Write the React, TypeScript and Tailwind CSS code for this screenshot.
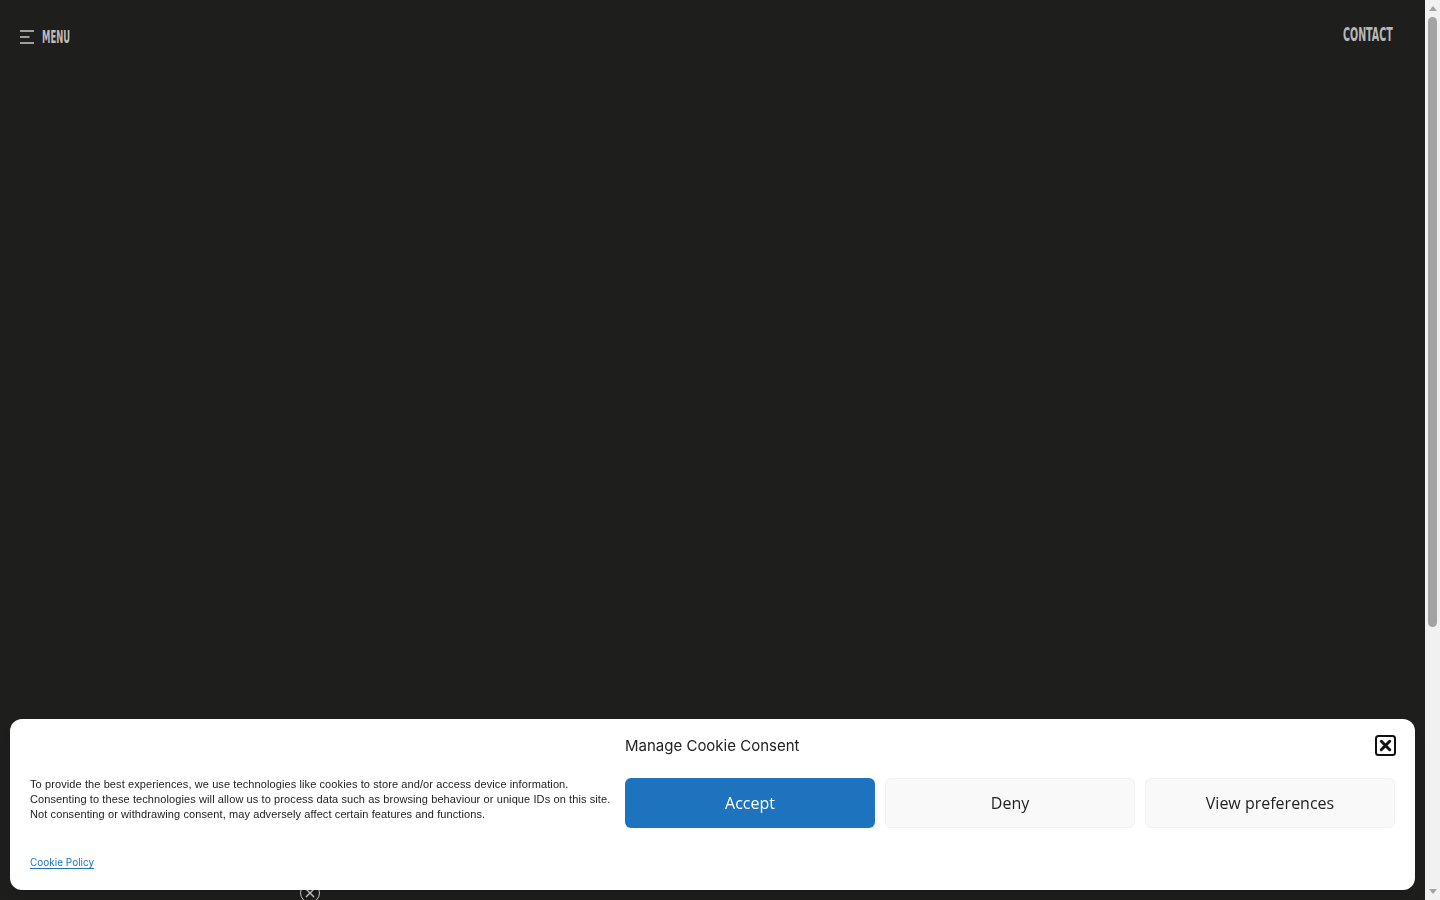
import { useState } from "react";

const displayFont =
  "font-['Liberation_Sans_Narrow','DejaVu_Sans_Condensed','Liberation_Sans',sans-serif]";

function MenuIcon() {
  return (
    <svg width="14" height="14" viewBox="0 0 14 14" fill="none" className="text-[#c9c9c9]">
      <path d="M0 1h14M0 7h9.5M0 13h14" stroke="currentColor" strokeWidth="1.6" />
    </svg>
  );
}

function CloseBox() {
  return (
    <svg width="21" height="21" viewBox="0 0 21 21" fill="none">
      <rect x="1" y="1" width="19" height="19" rx="2.5" stroke="#111" strokeWidth="2" />
      <path d="M6.3 6.3l8.4 8.4M14.7 6.3l-8.4 8.4" stroke="#111" strokeWidth="3" strokeLinecap="round" />
    </svg>
  );
}

// classic page scrollbar on the right edge
function ScrollBar() {
  return (
    <div className="w-[15px] shrink-0 bg-[#f1f1f1] flex flex-col">
      <div className="h-[17px] flex items-center justify-center">
        <svg width="8" height="5" viewBox="0 0 8 5">
          <path d="M4 0L8 5H0z" fill="#a3a3a3" />
        </svg>
      </div>
      <div className="flex-1 px-[3px]">
        <div className="h-[610px] rounded-full bg-[#a3a3a3]" />
      </div>
      <div className="h-[17px] flex items-center justify-center">
        <svg width="8" height="5" viewBox="0 0 8 5">
          <path d="M0 0H8L4 5z" fill="#a3a3a3" />
        </svg>
      </div>
    </div>
  );
}

function CookieBanner({ onClose }: { onClose: () => void }) {
  return (
    <div className="fixed left-[10px] right-[25px] bottom-[10px] z-50">
      <div className="bg-white rounded-xl shadow-lg px-5 pt-[15px] pb-[18px] grid grid-cols-[minmax(0,1fr)_770px] grid-rows-[28px_auto_auto] gap-x-[17px]">
        <div />
        <div className="flex items-center justify-between">
          <h2 className="-mt-[4px] text-[15px] text-[#222] font-['Inter',sans-serif]">Manage Cookie Consent</h2>
          <button onClick={onClose} aria-label="Close" className="-mt-[5px] mr-[-1px]">
            <CloseBox />
          </button>
        </div>

        <p className="self-start mt-[15px] whitespace-nowrap text-[11px] leading-[15px] tracking-[0.1px] text-[#222] font-['Liberation_Sans',sans-serif]">
          To provide the best experiences, we use technologies like cookies to store and/or access device information.
          <br />
          Consenting to these technologies will allow us to process data such as browsing behaviour or unique IDs on this site.
          <br />
          Not consenting or withdrawing consent, may adversely affect certain features and functions.
        </p>
        <div className="grid grid-cols-3 gap-[10px] mt-[16px] font-['Open_Sans',sans-serif]">
          <button className="h-[50px] rounded-md bg-[#1e73be] text-white text-[16px]">Accept</button>
          <button className="h-[50px] rounded-md bg-[#f9f9f9] border border-[#f2f2f2] text-[#222] text-[16px]">
            Deny
          </button>
          <button className="h-[50px] rounded-md bg-[#f9f9f9] border border-[#f2f2f2] text-[#222] text-[16px]">
            View preferences
          </button>
        </div>

        <div className="mt-[20px]">
          <a href="#" className="text-[10px] text-[#1e73be] underline underline-offset-2 font-['Inter',sans-serif]">
            Cookie Policy
          </a>
        </div>
        <div />
      </div>
    </div>
  );
}

export default function App() {
  const [showBanner, setShowBanner] = useState(true);

  return (
    <div className="h-screen flex bg-[#1e1e1c] overflow-hidden">
      <main className="flex-1 min-w-0">
        <header className="flex items-start justify-between pl-5 pr-[32px] pt-[24px]">
          <button className="flex items-center gap-2 mt-[4px]">
            <MenuIcon />
            <span
              className={`${displayFont} font-bold text-[18px] leading-none text-[#bdbdbd] uppercase inline-block scale-x-[0.52] origin-left`}
            >
              Menu
            </span>
          </button>
          <a
            href="#"
            className={`${displayFont} font-bold text-[20px] leading-none text-[#b8b8b8] uppercase inline-block scale-x-[0.53] origin-right`}
          >
            Contact
          </a>
        </header>
      </main>
      <ScrollBar />

      {/* floating dismiss badge peeking under the consent bar */}
      <div className="fixed left-[300px] top-[883px] w-[20px] h-[20px] rounded-full border border-[#d0d0d0] flex items-center justify-center">
        <svg width="10" height="10" viewBox="0 0 10 10">
          <path d="M1 1l8 8M9 1l-8 8" stroke="#d0d0d0" strokeWidth="1.4" />
        </svg>
      </div>

      {showBanner && <CookieBanner onClose={() => setShowBanner(false)} />}
    </div>
  );
}
